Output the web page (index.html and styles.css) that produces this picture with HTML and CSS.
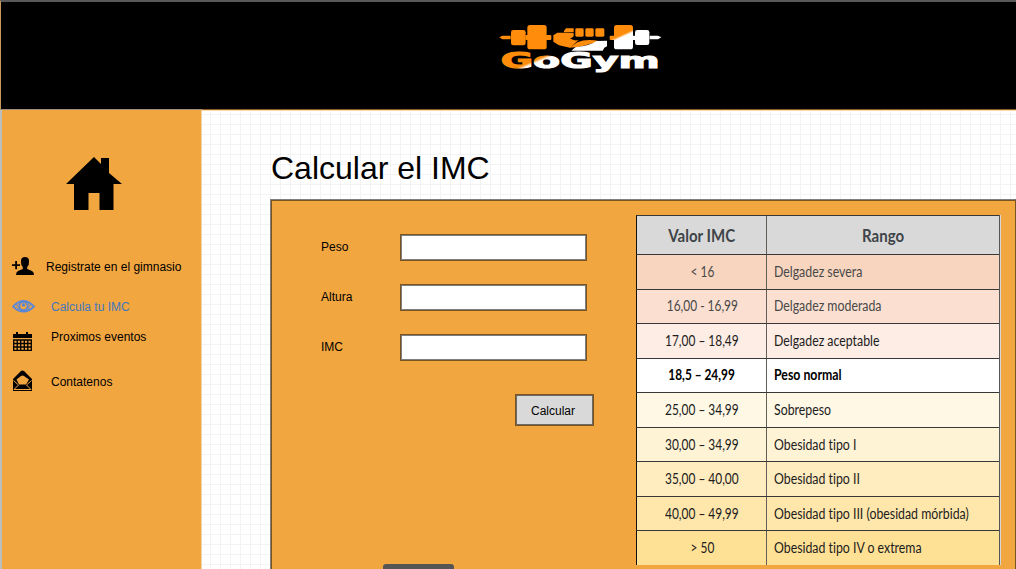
FILE: index.html
```
<!DOCTYPE html>
<html lang="es">
<head>
<meta charset="utf-8">
<title>GoGym - Calcular el IMC</title>
<link rel="stylesheet" href="styles.css">
</head>
<body>
<header class="topbar">
  <svg class="logo" width="180" height="65" viewBox="0 0 540 195" role="img" aria-label="GoGym">
    <defs>
      <linearGradient id="tone" gradientUnits="userSpaceOnUse" x1="288" y1="72" x2="296" y2="94">
        <stop offset="0.35" stop-color="#ff8c0a"/><stop offset="0.65" stop-color="#fff"/>
      </linearGradient>
      <linearGradient id="toneText" gradientUnits="userSpaceOnUse" x1="121" y1="134" x2="130" y2="155">
        <stop offset="0.3" stop-color="#ff8c0a"/><stop offset="0.7" stop-color="#fff"/>
      </linearGradient>
      <linearGradient id="tonePlate" gradientUnits="userSpaceOnUse" x1="399" y1="55" x2="404" y2="66">
        <stop offset="0.2" stop-color="#ff8c0a"/><stop offset="0.8" stop-color="#fff"/>
      </linearGradient>
    </defs>
    <g fill="#ff8c0a">
      <path d="M28 67L37 62H62V73H37Z"/>
      <rect x="63" y="45" width="44" height="46" rx="7"/>
      <rect x="106" y="60" width="78" height="15" rx="3"/>
      <rect x="112" y="30" width="58" height="73" rx="8"/>
      <path d="M222 47L228 40H251V52H222Z"/>
      <rect x="256" y="40" width="25" height="25" rx="4"/>
      <rect x="286" y="40" width="25" height="25" rx="4"/>
      <rect x="316" y="40" width="27" height="25" rx="4"/>
    </g>
    <path fill="url(#tone)" d="M190 61L202 53H225L250 54Q256 66 240 70Q252 79 266 75L240 98L207 91L190 80Z"/>
    <path fill="#ff8c0a" d="M238 98L262 82Q290 70 330 79L270 95Z"/>
    <path fill="#fff" d="M244 107L256 97Q300 92 320 78L351 77V94L343 98L338 107Z"/>
    <g fill="url(#tonePlate)">
      <rect x="359" y="62" width="86" height="13" rx="3"/>
      <rect x="372" y="30" width="57" height="73" rx="8"/>
    </g>
    <rect x="435" y="45" width="43" height="45" rx="7" fill="#fff"/>
    <path fill="#fff" d="M479 62H504L514 67L504 73H479Z"/>
    <text class="logo-name" x="32" y="160" textLength="477" lengthAdjust="spacingAndGlyphs" fill="url(#toneText)" stroke="url(#toneText)">GoGym</text>
  </svg>
</header>
<div class="layout">
  <aside class="sidebar">
    <a class="home" aria-label="Inicio">
      <svg width="56" height="54" viewBox="0 0 56 54"><path d="M0 27L28 0L35 7V1H43V16L56 27H47.500V53H33.500V36H22.500V53H8V27Z"/></svg>
    </a>
    <nav class="menu">
      <a class="item register">
        <svg width="24" height="20" viewBox="0 0 24 20"><path d="M0 7.200H3.200V4H5V7.200H8V9H5V12.300H3.200V9H0ZM9 4Q9 0 13 0T17 4Q17.400 8 15.200 10V12L20 14Q22 15 22 18H4Q4 15 6 14L10.800 12V10Q8.600 8 9 4Z"/></svg>
        <span>Registrate en el gimnasio</span>
      </a>
      <a class="item imc active">
        <svg width="24" height="16" viewBox="0 0 24 16"><path fill="none" stroke="currentColor" stroke-width="1.800" d="M1 7.500Q11.500-3.500 22 7.500Q11.500 17.500 1 7.500Z"/><circle cx="11.500" cy="7" r="4.200" fill="none" stroke="currentColor" stroke-width="2"/><circle cx="11.500" cy="6" r="1.800"/><path fill="none" stroke="currentColor" d="M5 4Q4 7 7 10M18 4Q19 7 16 10"/></svg>
        <span>Calcula tu IMC</span>
      </a>
      <a class="item events">
        <svg width="24" height="20" viewBox="0 0 24 20"><path d="M1 2H4V0H6V2H14V0H16V2H20V6H1Z"/><path fill="none" stroke="currentColor" stroke-width="1.300" d="M1.700 8H19.300V18.300H1.700ZM1.700 11.500H19.300M1.700 15H19.300M5.200 8V18M8.700 8V18M12.300 8V18M15.800 8V18"/></svg>
        <span>Proximos eventos</span>
      </a>
      <a class="item contact">
        <svg width="24" height="22" viewBox="0 0 24 22"><path fill-rule="evenodd" d="M1 9L9 1Q10.500 0 12 1L20 9V21H1ZM4.500 9.500L7 14.500H14L17 9.500L12 6Q10.500 5 9 6Z"/><path fill="none" stroke="#f2a640" stroke-width="1" d="M1.500 10.500L6.500 15L2 19.500H19L14.500 15L19.500 10.500"/></svg>
        <span>Contatenos</span>
      </a>
    </nav>
  </aside>
  <main class="content">
    <h1>Calcular el IMC</h1>
    <section class="panel">
      <form class="form">
        <label class="field"><span>Peso</span><input type="text"></label>
        <label class="field"><span>Altura</span><input type="text"></label>
        <label class="field"><span>IMC</span><input type="text"></label>
        <button type="button">Calcular</button>
      </form>
      <div class="ranges">
        <div class="row head"><div><span>Valor IMC</span></div><div><span>Rango</span></div></div>
        <div class="row severe"><div><span>&lt; 16</span></div><div><span>Delgadez severa</span></div></div>
        <div class="row moderate"><div><span>16,00 - 16,99</span></div><div><span>Delgadez moderada</span></div></div>
        <div class="row mild"><div><span>17,00 – 18,49</span></div><div><span>Delgadez aceptable</span></div></div>
        <div class="row normal"><div><span>18,5 – 24,99</span></div><div><span>Peso normal</span></div></div>
        <div class="row over"><div><span>25,00 – 34,99</span></div><div><span>Sobrepeso</span></div></div>
        <div class="row ob1"><div><span>30,00 – 34,99</span></div><div><span>Obesidad tipo I</span></div></div>
        <div class="row ob2"><div><span>35,00 – 40,00</span></div><div><span>Obesidad tipo II</span></div></div>
        <div class="row ob3"><div><span>40,00 – 49,99</span></div><div><span>Obesidad tipo III (obesidad mórbida)</span></div></div>
        <div class="row ob4"><div><span>&gt; 50</span></div><div><span>Obesidad tipo IV o extrema</span></div></div>
      </div>
      <div class="drawer-handle"></div>
    </section>
  </main>
</div>
</body>
</html>
```
FILE: styles.css
```
* { box-sizing: border-box; }
body {
  margin: 0;
  width: 1016px;
  height: 569px;
  overflow: hidden;
  font: 12px/14px "Liberation Sans", Arial, sans-serif;
  color: #000;
}
svg { display: block; fill: currentColor; flex: none; }
.topbar {
  height: 110px;
  padding: 13px 0 0 489px;
  background: #000;
  border-top: 2px solid #595959;
  border-left: 1px solid #c99a5c;
  border-bottom: 1px solid #8b5d22;
}
.logo-name {
  font: bold 62px "DejaVu Sans", sans-serif;
  stroke-width: 3px;
}
.layout { display: flex; height: 459px; }
.sidebar {
  width: 202px;
  padding: 47px 0 0 10px;
  background: #f2a640;
  border-left: 2px solid #bdbdbd;
  border-right: 1px solid #eed3ac;
  box-shadow: 0 -1px #a08e78;
}
.home { display: block; margin-left: 54px; }
.menu { display: flex; flex-direction: column; margin-top: 46px; }
.item { display: flex; align-items: flex-start; }
.item span { margin-left: 15px; }
.register { height: 42px; }
.register span { margin: 3px 0 0 10px; }
.active { height: 33px; color: #5b87d6; }
.active span { margin-top: 1px; color: #4278bd; }
.events { height: 38px; }
.events span { margin-top: -2px; }
.contact span { margin-top: 5px; }
.content {
  flex: 1;
  padding: 37px 0 0 68px;
  border-top: 1px solid #fbdcae;
  background-color: #fff;
  background-image: linear-gradient(#f3f3f3 1px, transparent 1px), linear-gradient(90deg, #f3f3f3 1px, transparent 1px);
  background-size: 10px 10px;
  background-position: 8px 3px;
}
h1 { margin: 0 0 0 1px; font-size: 32px; font-weight: 400; line-height: 40px; }
.panel {
  position: relative;
  display: flex;
  width: 746px;
  height: 390px;
  margin-top: 11px;
  border: 1px solid #7f7f7f;
  border-right-color: #795320;
  background: #f2a640;
  box-shadow: inset 1px 1px #795320;
}
.form { width: 365px; padding: 34px 0 0 50px; }
.field { display: flex; align-items: center; height: 27px; margin-bottom: 23px; }
.field span { width: 79px; padding-bottom: 1px; }
.field input {
  width: 187px;
  height: 27px;
  padding: 0;
  border: 1px solid #795320;
  background: #fff;
  outline: 1px solid #7f7f7f;
  outline-offset: -2px;
}
button {
  display: block;
  width: 79px;
  height: 32px;
  margin: 33px 0 0 194px;
  padding: 1px 3px 0 0;
  font: inherit;
  border: 1px solid #795320;
  background: #d9d9d9;
  color: #000;
  outline: 1px solid #6d6a65;
  outline-offset: -2px;
}
.ranges {
  display: grid;
  grid-template-columns: minmax(0, 1fr);
  grid-template-rows: 39px repeat(9, 1fr);
  width: 364px;
  height: 350px;
  margin-top: 15px;
  font: 14.5px/18px Lato, sans-serif;
  font-variant-ligatures: none;
  color: #1c1c1c;
  border-right: 1px solid #555;
  box-shadow: 1px 0 #d7d7d7;
}
.row { display: grid; grid-template-columns: 129px minmax(0, 1fr); border-top: 1px solid #383838; border-left: 1px solid #111; }
.row > div { display: flex; align-items: center; white-space: nowrap; }
.row > div:first-child { justify-content: center; padding-left: 1px; }
.row > div:last-child { border-left: 1px solid #625e59; padding-left: 7px; }
.row > div:last-child span { transform: scaleX(.85); transform-origin: left; }
.row span { transform: scaleX(.82); }
.head { background: #d9d9d9; font-size: 16.5px; font-weight: 700; color: #3e4448; }
.row.head > div { padding-top: 2px; }
.row.head > div:last-child { justify-content: center; padding-left: 0; }
.row.head > div span { transform: scaleX(.91); }
.row.head > div:last-child span { transform: scaleX(.91); transform-origin: center; }
.severe { background: #f8d5bf; color: #484848; }
.moderate { background: #fbe0d1; color: #484848; }
.mild { background: #fdede5; }
.normal { background: #fff; font-weight: 700; color: #000; }
.over { background: #fff8e5; }
.ob1 { background: #fff3d5; }
.ob2 { background: #ffecbf; }
.ob3 { background: #ffe7ac; }
.ob4 { background: #ffe196; }
/* Collapsed tab overlapping the bottom edge of the window */
.drawer-handle {
  position: absolute;
  left: 112px;
  top: 364px;
  width: 71px;
  height: 20px;
  border-radius: 3px;
  background: #555;
}
```
